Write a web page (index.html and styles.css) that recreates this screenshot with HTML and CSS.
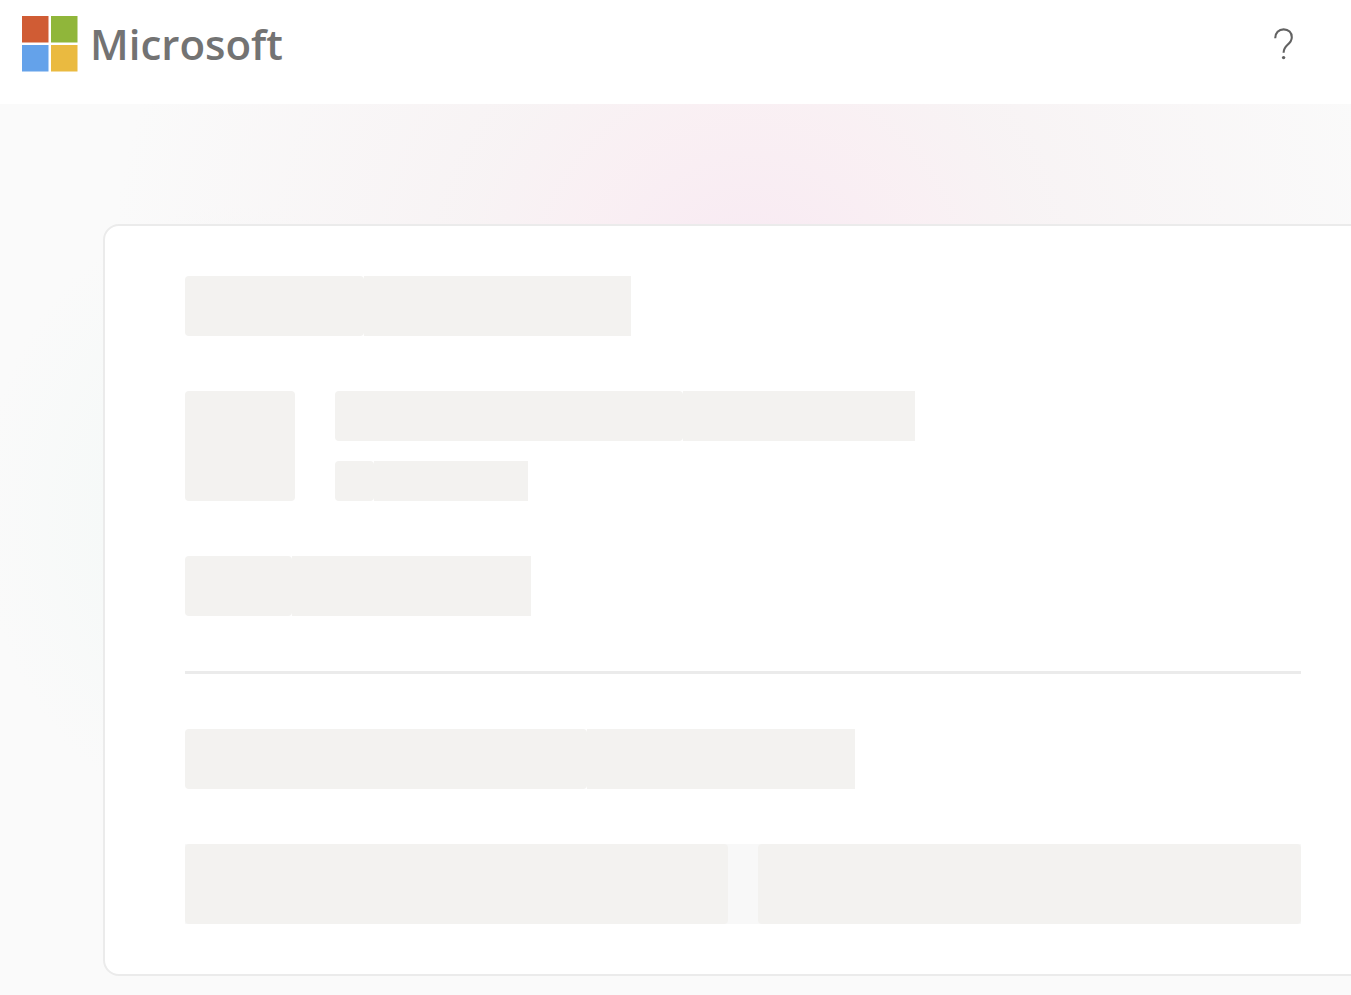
FILE: index.html
```html
<!DOCTYPE html>
<html lang="en">
<head>
    <meta charset="UTF-8">
    <meta name="viewport" content="width=device-width, initial-scale=1.0">
    <title>Microsoft</title>
    <link rel="stylesheet" href="styles.css">
</head>
<body>
    <header class="header">
        <a class="brand" href="#">
            <svg class="brand-mark" width="56" height="56" viewBox="0 0 56 56" aria-hidden="true">
                <rect width="26.5" height="26.5" fill="#d05c34"/>
                <rect x="29" width="26.5" height="26.5" fill="#90b63a"/>
                <rect y="29" width="26.5" height="26.5" fill="#64a2ea"/>
                <rect x="29" y="29" width="26.5" height="26.5" fill="#eaba40"/>
            </svg>
            <span class="brand-name">Microsoft</span>
        </a>
        <button class="help" type="button" aria-label="Help">
            <svg width="20" height="32" viewBox="0 0 20 32" aria-hidden="true">
                <path d="M1.2 10.2C1.2 4.8 4.8 1.4 9.7 1.4C14.6 1.4 17.8 4.7 17.8 9.2C17.8 12.4 16.4 14.3 13.6 16.8C10.9 19.2 9.6 20.8 9.6 24.8" fill="none" stroke="#626262" stroke-width="2.1"/>
                <circle cx="9.6" cy="29.6" r="1.7" fill="#626262"/>
            </svg>
        </button>
    </header>

    <main class="page">
        <section class="card" aria-busy="true">
            <div class="shimmer w-40"><span class="bar w-40"></span><span class="bar-rest"></span></div>

            <div class="profile">
                <div class="shimmer avatar"><span class="bar w-100"></span></div>
                <div class="lines">
                    <div class="shimmer line-large w-60"><span class="bar w-60"></span><span class="bar-rest"></span></div>
                    <div class="shimmer line-small w-20"><span class="bar w-20"></span><span class="bar-rest"></span></div>
                </div>
            </div>

            <div class="shimmer w-31"><span class="bar w-31"></span><span class="bar-rest"></span></div>

            <hr class="divider">

            <div class="shimmer w-60"><span class="bar w-60"></span><span class="bar-rest"></span></div>

            <div class="shimmer buttons"><span class="bar"></span><span class="bar"></span></div>
        </section>
    </main>
</body>
</html>
```

FILE: styles.css
```css
* {
    box-sizing: border-box;
}

body {
    display: flex;
    flex-direction: column;
    min-height: 100vh;
    margin: 0;
    font-family: "Open Sans", "Noto Sans", sans-serif;
    background: #fff;
}

.header {
    display: flex;
    align-items: flex-start;
    justify-content: space-between;
    height: 104px;
    padding: 16px 57px 0 22px;
}

.brand {
    display: flex;
    align-items: flex-start;
    gap: 12px;
    height: 56px;
    color: #737373;
    text-decoration: none;
}

.brand-mark {
    flex: none;
}

.brand-name {
    font-size: 42px;
    font-weight: 600;
    line-height: 56px;
}

.help {
    display: flex;
    align-items: center;
    justify-content: center;
    height: 56px;
    padding: 0;
    border: 0;
    background: none;
    cursor: pointer;
}

.page {
    flex: 1;
    padding: 120px 0 19px 103px;
    overflow: hidden;
    background:
        radial-gradient(ellipse 640px 640px at 750px 190px, rgba(243, 205, 230, 0.38) 0%, rgba(248, 215, 228, 0.3) 28%, rgba(244, 233, 236, 0.4) 45%, rgba(250, 250, 250, 0) 100%),
        radial-gradient(ellipse 260px 310px at 240px 410px, #f0f6f3 0%, #f6f9f8 50%, rgba(250, 250, 250, 0) 100%),
        #fafafa;
}

/* the card is wider than the window, its right edge is cut off */
.card {
    display: flex;
    flex-direction: column;
    gap: 55px;
    margin-right: -32px;
    padding: 50px 80px;
    border: 2px solid #ebebeb;
    border-radius: 16px;
    background: #fff;
}

.shimmer {
    display: flex;
    height: 60px;
}

.bar {
    border-radius: 4px;
    background: #f3f2f0;
}

.bar-rest {
    flex: 1;
    background: #f3f2f0;
}

.profile {
    display: flex;
    gap: 40px;
}

.avatar {
    width: 110px;
    height: 110px;
}

.lines {
    display: flex;
    flex: 1;
    flex-direction: column;
    gap: 20px;
}

.line-large {
    height: 50px;
}

.line-small {
    height: 40px;
}

.divider {
    width: 100%;
    height: 3px;
    margin: 0;
    border: 0;
    background: #ebebeb;
}

.buttons {
    gap: 30px;
    height: 80px;
    background: #f8f8f8;
}

.buttons .bar {
    flex: 1;
}

.w-20 {
    width: 20%;
}

.w-31 {
    width: 31%;
}

.w-40 {
    width: 40%;
}

.w-60 {
    width: 60%;
}

.w-100 {
    width: 100%;
}
```
